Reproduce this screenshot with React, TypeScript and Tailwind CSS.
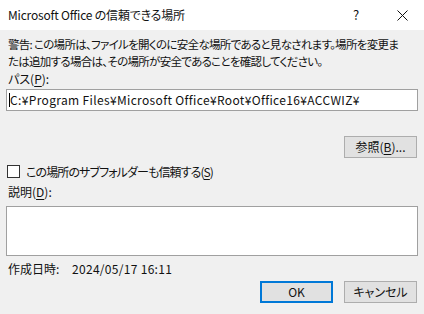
import React from "react"

const font = "font-['Noto_Sans_CJK_JP',sans-serif] [font-feature-settings:'palt']"

const Key = ({ k }: { k: string }) => <span className="underline underline-offset-2">{k}</span>

const Button = ({ children, primary }: { children: React.ReactNode; primary?: boolean }) => (
  <button
    className={`w-[73px] h-[22px] flex items-center justify-center bg-[#e1e1e1] text-[12px] leading-none text-[#111] ${
      primary ? "border-2 border-[#0078d7]" : "border border-[#adadad]"
    }`}
  >
    {children}
  </button>
)

export default function App() {
  return (
    <div className={`w-[424px] h-[314px] flex flex-col bg-[#f0f0f0] text-[#111] ${font}`}>
      <div className="h-[30px] bg-white flex items-center shrink-0">
        <span className="pl-[8px] text-[12px] tracking-[-0.2px] text-[#111]">Microsoft Office の信頼できる場所</span>
        <span className="ml-auto w-[12px] text-center text-[13px]">?</span>
        <span className="ml-[34px] mr-[16px] w-[12px] flex justify-center">
          <svg width="11" height="11" viewBox="0 0 11 11">
            <path d="M0.5 0.5 L10.5 10.5 M10.5 0.5 L0.5 10.5" stroke="#111" strokeWidth="1" />
          </svg>
        </span>
      </div>

      <div className="flex flex-col px-[6px] pt-[6px] text-[12px]">
        <p className="px-[2px] leading-[17px] whitespace-nowrap text-[11.5px] tracking-[-0.7px]">
          警告: この場所は、ファイルを開くのに安全な場所であると見なされます。場所を変更ま
          <br />
          たは追加する場合は、その場所が安全であることを確認してください。
        </p>
        <div className="px-[2px] leading-[17px]">
          パス(<Key k="P" />):
        </div>
        <div className="mt-[2px] h-[22px] bg-white border border-[#a0a0a0] flex items-center pl-[2px] text-[12px] whitespace-nowrap">
          <span className="w-px h-[14px] bg-black" />
          <span className="tracking-[0.35px]">C:¥Program Files¥Microsoft Office¥Root¥Office16¥ACCWIZ¥</span>
        </div>
        <div className="mt-[25px] flex justify-end pr-[1px]">
          <Button>
            参照(<Key k="B" />)...
          </Button>
        </div>
        <label className="mt-[5px] h-[17px] flex items-center gap-[6px]">
          <span className="ml-[1px] w-[13px] h-[13px] border border-[#333] bg-white" />
          <span className="leading-[17px] tracking-[-0.9px]">
            この場所のサブフォルダーも信頼する(<Key k="S" />)
          </span>
        </label>
        <div className="mt-[3px] px-[2px] leading-[17px]">
          説明(<Key k="D" />):
        </div>
        <div className="mt-[6px] h-[50px] bg-white border border-[#a0a0a0]" />
        <div className="mt-[4px] px-[2px] leading-[17px] flex">
          <span className="w-[64px]">作成日時:</span>
          <span className="tracking-[0.3px]">2024/05/17 16:11</span>
        </div>
        <div className="mt-[4px] flex justify-end gap-[11px] pr-[1px]">
          <Button primary>OK</Button>
          <Button>キャンセル</Button>
        </div>
      </div>
    </div>
  )
}
